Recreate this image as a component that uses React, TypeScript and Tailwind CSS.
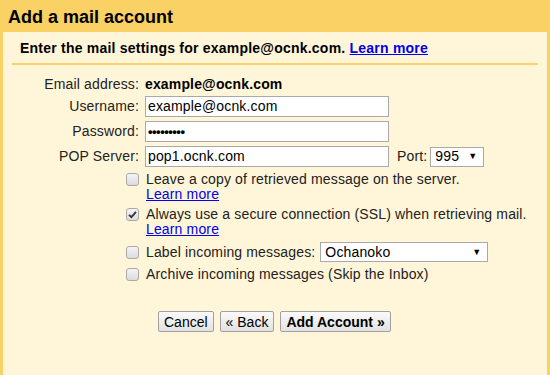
import React from "react";

function Check({ checked }: { checked?: boolean }) {
  return (
    <span className="mt-[1px] flex h-[13px] w-[13px] shrink-0 items-center justify-center rounded-[3px] border border-[#a9a9a9] bg-gradient-to-b from-[#f4f4f4] to-[#dcdcdc]">
      {checked && (
        <svg width="9" height="9" viewBox="0 0 9 9">
          <path d="M1 4.8 L3.4 7.2 L8 1.8" fill="none" stroke="#333" strokeWidth="1.8" />
        </svg>
      )}
    </span>
  );
}

function Field({ value, password }: { value: string; password?: boolean }) {
  return (
    <div className="flex h-[21px] w-[244px] items-center border border-[#a9a9a9] bg-white px-[2px] text-[14px] text-black">
      {password ? <span className="text-[13px] font-bold tracking-[-0.5px]">•••••••••</span> : value}
    </div>
  );
}

function Select({ value, w }: { value: string; w: string }) {
  return (
    <div className={`flex h-[20px] ${w} items-center justify-between border border-[#a9a9a9] bg-white pl-[4px] pr-[6px] text-[14px] text-black`}>
      <span>{value}</span>
      <span className="text-[9px]">▼</span>
    </div>
  );
}

function Btn({ children, bold }: { children: React.ReactNode; bold?: boolean }) {
  return (
    <button className={`h-[21px] rounded-[2px] border border-[#a0a0a0] bg-gradient-to-b from-[#fafafa] to-[#e2e2e2] px-[5px] text-[14px] leading-none tracking-normal text-black ${bold ? "font-bold" : ""}`}>
      {children}
    </button>
  );
}

const learn = "text-[#0000ee] underline";

export default function App() {
  return (
    <div className="h-[375px] w-[550px] overflow-hidden bg-[#fad165] font-['Liberation_Sans',Arial,sans-serif] text-[14px] text-[#222]">
      <h1 className="px-[8px] pt-[6px] text-[18px] font-bold leading-[22px] text-black">Add a mail account</h1>
      <div className="mx-[3px] mt-[4px] h-[400px] bg-[#fff5d8] px-[9px] pt-[8px] tracking-[0.15px]">
        <div className="border-b-2 border-[#fad165] pb-[7px] pl-[8px] font-bold leading-[16px] tracking-[0.22px] text-black">
          Enter the mail settings for example@ocnk.com.{" "}
          <span className="text-[#0000ee] underline">Learn more</span>
        </div>

        <div className="mt-[8px] flex flex-col gap-[4px] pl-[3px]">
          <div className="flex h-[19px] items-center gap-[6px] pt-[4px]">
            <span className="w-[124px] text-right">Email address:</span>
            <span className="font-bold text-black">example@ocnk.com</span>
          </div>
          <div className="flex items-center gap-[6px]">
            <span className="w-[124px] text-right">Username:</span>
            <Field value="example@ocnk.com" />
          </div>
          <div className="flex items-center gap-[6px]">
            <span className="w-[124px] text-right">Password:</span>
            <Field value="" password />
          </div>
          <div className="flex items-center gap-[6px]">
            <span className="w-[124px] text-right">POP Server:</span>
            <Field value="pop1.ocnk.com" />
            <span className="ml-[2px] mr-[-3px]">Port:</span>
            <Select value="995" w="w-[54px]" />
          </div>

          <div className="ml-[111px] mt-[1px] flex flex-col gap-[5px] leading-[15px]">
            <div className="flex gap-[7px]">
              <Check />
              <div>
                <div>Leave a copy of retrieved message on the server.</div>
                <div className={learn}>Learn more</div>
              </div>
            </div>
            <div className="flex gap-[7px]">
              <Check checked />
              <div>
                <div>Always use a secure connection (SSL) when retrieving mail.</div>
                <div className={learn}>Learn more</div>
              </div>
            </div>
            <div className="flex h-[20px] items-center gap-[7px]">
              <Check />
              <span className="mr-[-2px]">Label incoming messages:</span>
              <Select value="Ochanoko" w="w-[168px]" />
            </div>
            <div className="flex gap-[7px]">
              <Check />
              <span>Archive incoming messages (Skip the Inbox)</span>
            </div>
          </div>
        </div>

        <div className="mt-[29px] flex gap-[6px] pl-[146px]">
          <Btn>Cancel</Btn>
          <Btn>« Back</Btn>
          <Btn bold>Add Account »</Btn>
        </div>
      </div>
    </div>
  );
}
